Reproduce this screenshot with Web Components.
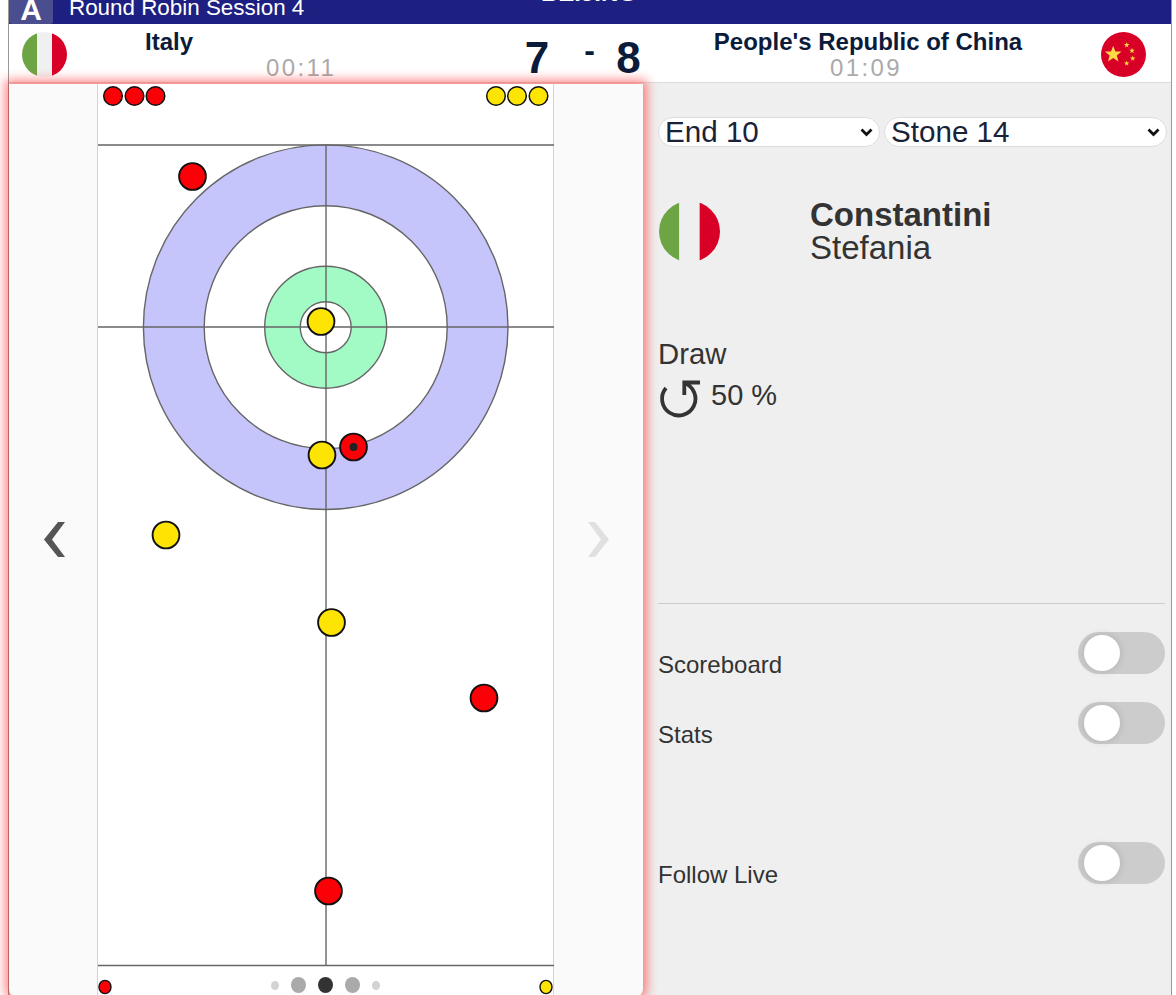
<!DOCTYPE html>
<html>
<head>
<meta charset="utf-8">
<title>Curling</title>
<style>
  html, body { margin: 0; height: 995px; overflow: hidden; background: #fff; }
  body { font-family: "Liberation Sans", Arial, sans-serif; padding-left: 8px; padding-right: 4px; box-sizing: border-box; }
  #app { display: block; height: 995px; border-left: 1px solid #999; border-right: 1px solid #999; }
</style>
</head>
<body>
<div id="app">
  <top-bar session="Round Robin Session 4" group="A"></top-bar>
  <score-row></score-row>
  <main-area>
    <ice-sheet></ice-sheet>
    <side-panel></side-panel>
  </main-area>
</div>

<script>
const ITALY_FLAG = (size, middle) => `
  <svg width="${size}" height="${size}" viewBox="0 0 60 60">
    <defs><clipPath id="c"><circle cx="30" cy="30" r="30"/></clipPath></defs>
    <g clip-path="url(#c)">
      <rect width="20" height="60" x="0" fill="#6da544"/>
      <rect width="20.5" height="60" x="20" fill="${middle}"/>
      <rect width="20" height="60" x="40" fill="#d80027"/>
    </g>
  </svg>`;

class TopBar extends HTMLElement {
  constructor() {
    super();
    this.shadowDOM = this.attachShadow({ mode: "open" });
  }
  connectedCallback() {
    this.shadowDOM.innerHTML = `
      <style>
        :host { display: flex; height: 24px; background: #1d2080; color: #fff; overflow: hidden; position: relative; }
        .badge { width: 44px; height: 24px; background: #4b4e8e; border-radius: 0 0 3px 3px; display: flex; justify-content: center; align-items: flex-end; font-weight: bold; font-size: 30px; line-height: 24px; }
        .badge span { margin-bottom: 2px; }
        .session { margin-left: 16px; font-size: 22.4px; line-height: 24px; margin-top: -4px; }
        .event { position: absolute; left: 532px; top: -19px; font-size: 24px; line-height: 24px; font-weight: bold; }
      </style>
      <div class="badge"><span>${this.getAttribute("group")}</span></div>
      <div class="session">${this.getAttribute("session")}</div>
      <div class="event">BEIJING</div>
    `;
  }
}
customElements.define("top-bar", TopBar);

class ScoreRow extends HTMLElement {
  constructor() {
    super();
    this.shadowDOM = this.attachShadow({ mode: "open" });
  }
  connectedCallback() {
    this.shadowDOM.innerHTML = `
      <style>
        :host { display: grid; grid-template-columns: 58px 204px 240px 130px 454px 1fr; height: 58px; background: #fff; color: #0b1b3a; border-bottom: 1px solid #ddd; }
        .flag { padding: 8px 0 0 13px; }
        .name { font-weight: bold; font-size: 24px; line-height: 26px; padding-top: 5px; text-align: center; }
        .clock { color: #aaa; font-size: 24px; letter-spacing: 2.4px; line-height: 26px; }
        .t1 { padding-top: 31px; margin-left: -5px; }
        .score { display: flex; font-weight: bold; font-size: 44px; line-height: 50px; padding-top: 9px; }
        .score b:first-child { width: 52px; text-align: center; }
        .score i { font-style: normal; width: 53px; text-align: center; font-size: 32px; line-height: 34px; }
        .score b:last-child { width: 25px; text-align: center; }
        .right { text-align: center; }
        .right .clock { padding-right: 4px; line-height: 24px; margin-top: 1px; }
        .cn { padding: 8px 0 0 6px; }
      </style>
      <div class="flag">${ITALY_FLAG(45, "#f0f0f0")}</div>
      <div class="name">Italy</div>
      <div class="clock t1">00:11</div>
      <div class="score"><b>7</b><i>-</i><b>8</b></div>
      <div class="right"><div class="name">People's Republic of China</div><div class="clock">01:09</div></div>
      <div class="cn">
        <svg width="45" height="45" viewBox="0 0 45 45">
          <defs><polygon id="s" points="0,-2.9 .7,-.9 2.8,-.9 1.1,.4 1.7,2.4 0,1.2 -1.7,2.4 -1.1,.4 -2.8,-.9 -.7,-.9"/></defs>
          <circle cx="22.5" cy="22.5" r="22.5" fill="#d80027"/>
          <g fill="#ffda44">
            <polygon points="12.2,13.7 14.4,19.4 20.5,19.6 15.8,23.5 17.4,29.5 12.2,26.1 7,29.5 8.6,23.5 3.9,19.6 10,19.4"/>
            <use href="#s" x="25.7" y="13"/>
            <use href="#s" x="31" y="18.7"/>
            <use href="#s" x="31.7" y="26.3"/>
            <use href="#s" x="25.7" y="31.3"/>
          </g>
        </svg>
      </div>
    `;
  }
}
customElements.define("score-row", ScoreRow);

class MainArea extends HTMLElement {
  constructor() {
    super();
    this.shadowDOM = this.attachShadow({ mode: "open" });
  }
  connectedCallback() {
    this.shadowDOM.innerHTML = `
      <style>
        :host { display: flex; background: #efefef; height: 912px; }
      </style>
      <slot></slot>
    `;
  }
}
customElements.define("main-area", MainArea);

class IceSheet extends HTMLElement {
  constructor() {
    super();
    this.shadowDOM = this.attachShadow({ mode: "open" });
  }
  connectedCallback() {
    // x, y in page coordinates, the viewBox starts at the sheet's origin (97, 84)
    const stones = [
      ["r", 192.5, 176.5], ["y", 321, 321.5], ["y", 322, 455], ["r", 353.5, 447, true],
      ["y", 166, 535], ["y", 331.5, 622.5], ["r", 484, 698], ["r", 328.5, 891],
    ];
    const waiting = [
      ["r", 113, 96], ["r", 134.5, 96], ["r", 155.5, 96],
      ["y", 496, 96], ["y", 517, 96], ["y", 538.5, 96],
    ];
    const fill = (c) => (c === "r" ? "#fb0007" : "#fde403");
    const stoneSvg = stones.map(([c, x, y, last]) =>
      `<circle cx="${x}" cy="${y}" r="13.4" fill="${fill(c)}" stroke="#111" stroke-width="1.9"/>` +
      (last ? `<circle cx="${x}" cy="${y}" r="4" fill="#222"/>` : "")).join("");
    const waitingSvg = waiting.map(([c, x, y]) =>
      `<circle cx="${x}" cy="${y}" r="9.3" fill="${fill(c)}" stroke="#111" stroke-width="1.5"/>`).join("");
    this.shadowDOM.innerHTML = `
      <style>
        :host { display: block; position: relative; z-index: 2; flex: none; width: 634px; height: 913px; margin-top: 1px; background: #fafafa; border-radius: 0 0 8px 8px; box-shadow: 0 0 11px 4px rgba(255, 0, 0, .48); }
        .sheet { position: absolute; left: 88px; top: 0; width: 457px; height: 911px; display: block; }
        .nav { position: absolute; top: 438px; }
        .prev { left: 34px; }
        .next { left: 579px; }
        .dots { position: absolute; left: 88px; width: 457px; top: 893px; height: 16px; display: flex; justify-content: center; align-items: center; gap: 12px; }
        .dots span { width: 15px; height: 16px; border-radius: 50%; background: #aaa; }
        .dots .s { width: 8px; height: 9px; background: #d3d3d3; }
        .dots .on { background: #333; }
      </style>
      <svg class="sheet" viewBox="97 84 457 911">
        <rect x="97" y="84" width="457" height="911" fill="#fff"/>
        <path d="M97.5 84V995M553.5 84V995" stroke="#d4d4d4" fill="none"/>
        <g stroke="#666" stroke-width="1.4">
          <circle cx="325.7" cy="327.2" r="182.3" fill="#c5c5fb"/>
          <circle cx="325.7" cy="327.2" r="121.5" fill="#fff"/>
          <circle cx="325.7" cy="327.2" r="61" fill="#a2fbc5"/>
          <circle cx="325.7" cy="327.2" r="25.5" fill="#fff"/>
          <path d="M98 145H554M98 327H554M326 145V965" fill="none"/>
          <path d="M98 965.5H554" fill="none" stroke-width="1.6"/>
        </g>
        ${stoneSvg}
        ${waitingSvg}
        <ellipse cx="105" cy="987" rx="6" ry="6.6" fill="#fb0007" stroke="#111" stroke-width="1.4"/>
        <ellipse cx="546" cy="987" rx="6" ry="6.6" fill="#fde403" stroke="#111" stroke-width="1.4"/>
      </svg>
      <svg class="nav prev" width="23" height="36" viewBox="0 0 23 36"><polygon points="22,0 15,0 1,17.5 15,35 22,35 9,17.5" fill="#555"/></svg>
      <svg class="nav next" width="22" height="36" viewBox="0 0 22 36"><polygon points="0,0 7,0 21,17.5 7,35 0,35 13,17.5" fill="#e0e0e0"/></svg>
      <div class="dots"><span class="s"></span><span></span><span class="on"></span><span></span><span class="s"></span></div>
    `;
  }
}
customElements.define("ice-sheet", IceSheet);

class ToggleRow extends HTMLElement {
  constructor() {
    super();
    this.attachShadow({ mode: "open" }).innerHTML = `
      <style>
        :host { display: flex; justify-content: space-between; align-items: flex-start; height: 42px; font-size: 24px; color: #333; }
        .label { padding-top: 20px; line-height: 26px; }
        .track { width: 87px; height: 42px; border-radius: 21px; background: #ccc; display: flex; align-items: center; padding-left: 6px; box-sizing: border-box; }
        .knob { width: 36px; height: 36px; border-radius: 50%; background: #fff; box-shadow: 0 0 6px 2px rgba(0, 0, 0, .09); }
      </style>
      <div class="label"><slot></slot></div>
      <div class="track"><div class="knob"></div></div>
    `;
  }
}
customElements.define("toggle-row", ToggleRow);

class PillSelect extends HTMLElement {
  constructor() {
    super();
    this.attachShadow({ mode: "open" }).innerHTML = `
      <style>
        :host { display: flex; align-items: center; justify-content: space-between; height: 30px; box-sizing: border-box; background: #fff; border: 1px solid #ddd; border-radius: 15px; font-size: 29.6px; color: #1a2238; padding: 0 6px; }
        svg { flex: none; }
      </style>
      <span><slot></slot></span>
      <svg width="13" height="9" viewBox="0 0 13 9"><path d="M1.500 1.500 L6.500 6.500 L11.500 1.500" fill="none" stroke="#111" stroke-width="2.800"/></svg>
    `;
  }
}
customElements.define("pill-select", PillSelect);

class SidePanel extends HTMLElement {
  constructor() {
    super();
    this.shadowDOM = this.attachShadow({ mode: "open" });
  }
  connectedCallback() {
    this.shadowDOM.innerHTML = `
      <style>
        :host { display: block; flex: 1; min-width: 0; padding: 34px 6px 0 15px; color: #333; }
        .selects { display: flex; gap: 4px; margin-right: -2px; }
        .selects pill-select:first-child { width: 222px; flex: none; }
        .selects pill-select:last-child { flex: 1; }
        .player { display: flex; margin-top: 54px; height: 60px; }
        .player svg { margin-left: 1px; flex: none; }
        .player .who { margin-left: 90px; font-size: 33px; line-height: 33px; margin-top: -3px; }
        .who b { display: block; }
        .shot { font-size: 29.3px; line-height: 34px; margin-top: 76px; }
        .rot { display: flex; gap: 9px; margin-top: 7px; height: 44px; font-size: 29px; line-height: 32px; }
        .rot svg { flex: none; }
        .rot span { margin-top: 1px; }
        hr { border: 0; border-top: 1px solid #ccc; margin: 181px 0 0; }
        toggle-row { margin-top: 28px; }
        .live { margin-top: 98px; }
      </style>
      <div class="selects">
        <pill-select>End 10</pill-select>
        <pill-select>Stone 14</pill-select>
      </div>
      <div class="player">
        ${ITALY_FLAG(61, "#efefef")}
        <div class="who"><b>Constantini</b>Stefania</div>
      </div>
      <div class="shot">Draw</div>
      <div class="rot">
        <svg width="44" height="44" viewBox="0 0 44 44"><path d="M8 10 A16.700 16.700 0 1 0 26.300 5 M42 4.500 H26.300 V17" fill="none" stroke="#333" stroke-width="3.800"/></svg>
        <span>50 %</span>
      </div>
      <hr>
      <toggle-row>Scoreboard</toggle-row>
      <toggle-row>Stats</toggle-row>
      <toggle-row class="live">Follow Live</toggle-row>
    `;
  }
}
customElements.define("side-panel", SidePanel);
</script>
</body>
</html>
